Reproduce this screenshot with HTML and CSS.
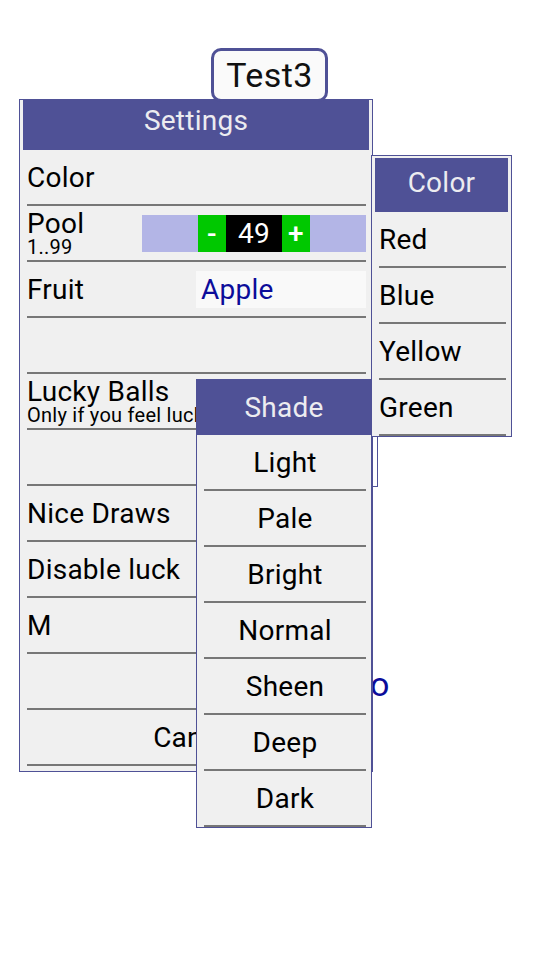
FILE: index.html
```html
<!DOCTYPE html>
<html>
<head>
<meta charset="utf-8">
<link rel="stylesheet" href="styles.css">
</head>
<body>
<div class="screen">
  <div class="overflow-o">o</div>

  <div class="win settings">
    <div class="hdr">Settings</div>
    <div class="row"><span class="lbl">Color</span></div>
    <div class="row">
      <div class="lbl2"><div class="t">Pool</div><div class="s">1..99</div></div>
      <div class="stepper"><span class="btn">-</span><span class="val">49</span><span class="btn">+</span></div>
    </div>
    <div class="row"><span class="lbl">Fruit</span><div class="field">Apple</div></div>
    <div class="row"></div>
    <div class="row">
      <div class="lbl2"><div class="t">Lucky Balls</div><div class="s">Only if you feel lucky</div></div>
    </div>
    <div class="row"></div>
    <div class="row"><span class="lbl">Nice Draws</span></div>
    <div class="row"><span class="lbl">Disable luck</span></div>
    <div class="row"><span class="lbl">M</span></div>
    <div class="row"></div>
    <div class="row center"><span class="lbl">Cancel</span></div>
  </div>

  <div class="stub"></div>

  <div class="win colorpop">
    <div class="phdr">Color</div>
    <div class="item">Red</div>
    <div class="item">Blue</div>
    <div class="item">Yellow</div>
    <div class="item">Green</div>
  </div>

  <div class="win shadepop">
    <div class="shdr">Shade</div>
    <div class="sitem">Light</div>
    <div class="sitem">Pale</div>
    <div class="sitem">Bright</div>
    <div class="sitem">Normal</div>
    <div class="sitem">Sheen</div>
    <div class="sitem">Deep</div>
    <div class="sitem">Dark</div>
  </div>

  <div class="title">Test3</div>
</div>
</body>
</html>
```

FILE: styles.css
```css
html, body {
  margin: 0;
  padding: 0;
  background: #ffffff;
}
body {
  font-family: Roboto, "Noto Sans", sans-serif;
  font-size: 28px;
  letter-spacing: 0.25px;
  color: #000;
}
.screen {
  position: relative;
  width: 540px;
  height: 960px;
  overflow: hidden;
}

/* windows on the canvas */
.win {
  position: absolute;
  box-sizing: border-box;
  border: 1px solid #4f5196;
  background: #f0f0f0;
}

.title {
  position: absolute;
  left: 211px;
  top: 48px;
  width: 117px;
  height: 54px;
  box-sizing: border-box;
  border: 3px solid #4f5196;
  border-radius: 10px;
  background: #fafafa;
  font-size: 34px;
  letter-spacing: 0.4px;
  color: #111;
  display: flex;
  align-items: center;
  justify-content: center;
  z-index: 6;
}

/* settings panel */
.settings {
  left: 19px;
  top: 99px;
  width: 354px;
  padding: 0 3px 5px 3px;
  z-index: 1;
}
.hdr {
  height: 50px;
  box-sizing: border-box;
  padding-top: 4px;
  line-height: 33px;
  background: #4f5196;
  color: #ececf0;
  text-align: center;
}
.row {
  height: 56px;
  box-sizing: border-box;
  border-bottom: 2px solid #777777;
  margin: 0 3px 0 4px;
  display: flex;
  align-items: center;
  justify-content: space-between;
  white-space: nowrap;
}
.row.center {
  justify-content: center;
}
.lbl2 .t {
  line-height: 28px;
}
.lbl2 .s {
  font-size: 20px;
  line-height: 19px;
}
.stepper {
  width: 224px;
  height: 37px;
  background: #b3b5e6;
  display: flex;
  justify-content: center;
}
.stepper .btn {
  width: 28px;
  background: #00c800;
  color: #fff;
  text-align: center;
  line-height: 37px;
  font-weight: 500;
}
.stepper .val {
  width: 56px;
  background: #000;
  color: #fff;
  text-align: center;
  line-height: 37px;
}
.field {
  width: 170px;
  height: 37px;
  box-sizing: border-box;
  padding-left: 5px;
  background: #f9f9f9;
  color: #0c0c9a;
  line-height: 37px;
}

.overflow-o {
  position: absolute;
  left: 370px;
  top: 667px;
  font-size: 34px;
  line-height: 34px;
  color: #0c0c9a;
  z-index: 0;
}

.stub {
  position: absolute;
  left: 372px;
  top: 420px;
  width: 6px;
  height: 67px;
  box-sizing: border-box;
  border: 1px solid #4f5196;
  background: #fff;
  z-index: 2;
}

/* color popup */
.colorpop {
  left: 371px;
  top: 155px;
  width: 141px;
  padding: 2px 3px 0 3px;
  z-index: 3;
}
.phdr {
  height: 54px;
  box-sizing: border-box;
  padding-bottom: 5px;
  background: #4f5196;
  color: #ececf0;
  display: flex;
  align-items: center;
  justify-content: center;
}
.item {
  height: 56px;
  box-sizing: border-box;
  border-bottom: 2px solid #777777;
  margin: 0 2px 0 4px;
  display: flex;
  align-items: center;
}

/* shade popup */
.shadepop {
  left: 196px;
  top: 379px;
  width: 176px;
  z-index: 4;
}
.shdr {
  height: 55px;
  background: #4f5196;
  color: #ececf0;
  display: flex;
  align-items: center;
  justify-content: center;
}
.sitem {
  height: 56px;
  box-sizing: border-box;
  border-bottom: 2px solid #777777;
  margin: 0 5px 0 7px;
  display: flex;
  align-items: center;
  justify-content: center;
}
```
